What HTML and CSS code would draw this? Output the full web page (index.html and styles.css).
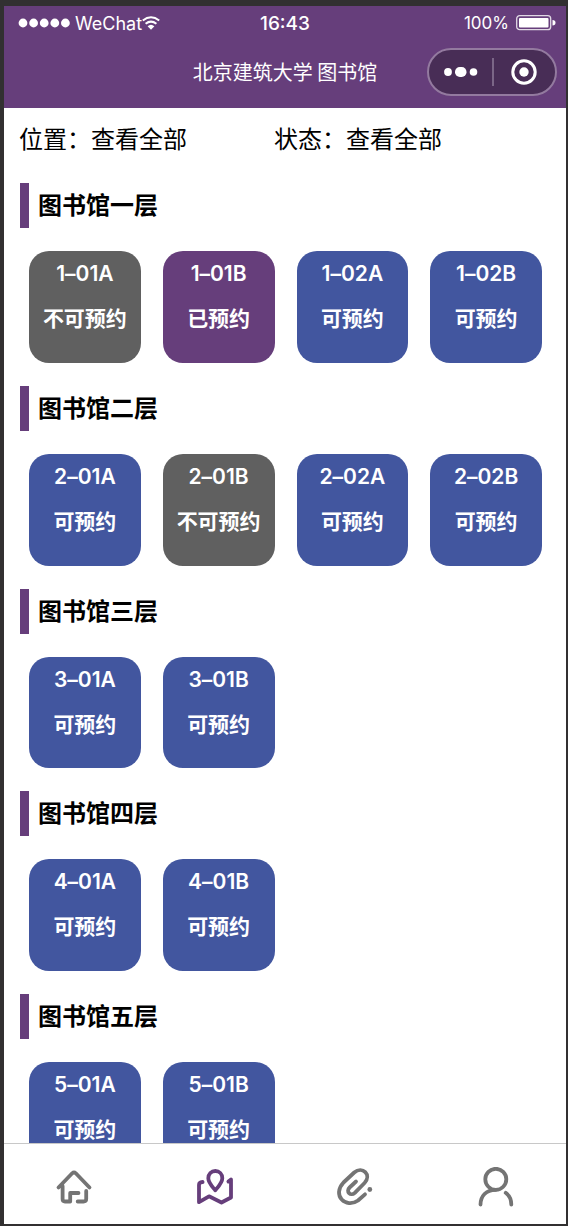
FILE: index.html
```html
<!DOCTYPE html>
<html lang="zh-CN">
<head>
<meta charset="utf-8">
<meta name="viewport" content="width=device-width, initial-scale=1">
<title>北京建筑大学 图书馆</title>
<link rel="stylesheet" href="styles.css">
</head>
<body>
<div class="phone">
  <header class="header">
    <div class="status">
      <div class="carrier">
        <svg class="signal" viewBox="0 0 52 10" aria-hidden="true"><circle cx="5" cy="5" r="4.4"/><circle cx="15.6" cy="5" r="4.4"/><circle cx="26.2" cy="5" r="4.4"/><circle cx="36.8" cy="5" r="4.4"/><circle cx="47.4" cy="5" r="4.4"/></svg>
        <span>WeChat</span>
        <svg class="wifi" viewBox="0 0 18 14" aria-hidden="true"><path d="M.8 4.500Q9-2 17.200 4.500M3.600 7.800Q9 3.400 14.400 7.800" fill="none" stroke="#fff" stroke-width="2"/><path d="M5.600 10.200Q9 7.200 12.400 10.200L9 13.800Z" fill="#fff"/></svg>
      </div>
      <span class="time">16:43</span>
      <div class="power">
        <span>100%</span>
        <svg class="battery" viewBox="0 0 40 16" aria-hidden="true"><rect x=".7" y=".7" width="34" height="14" rx="3" fill="none" stroke="#fff" stroke-opacity=".8" stroke-width="1.300"/><rect x="3" y="3" width="29.500" height="9.500" rx="1" fill="#fff"/><path d="M36.500 5Q39.500 5 39.500 7.700T36.500 10.500Z" fill="#fff"/></svg>
      </div>
    </div>
    <div class="nav">
      <h1 class="title">北京建筑大学 图书馆</h1>
      <div class="capsule">
        <button class="capsule-btn" type="button" aria-label="更多"><svg class="dots" viewBox="0 0 34 12" fill="#fff"><circle cx="4" cy="6" r="3.900"/><rect x="11" y="1" width="11.500" height="10" rx="4.800"/><circle cx="29.500" cy="6" r="3.800"/></svg></button>
        <button class="capsule-btn" type="button" aria-label="关闭"><svg class="target" viewBox="0 0 26 26"><circle cx="13" cy="13" r="11.200" fill="none" stroke="#fff" stroke-width="3"/><circle cx="13" cy="13" r="4.700" fill="#fff"/></svg></button>
      </div>
    </div>
  </header>

  <main class="content">
    <form class="filters">
      <div class="filter"><label for="place">位置：</label><select id="place" class="picker"><option>查看全部</option></select></div>
      <div class="filter"><label for="state">状态：</label><select id="state" class="picker"><option>查看全部</option></select></div>
    </form>

    <section class="floor">
      <h2 class="floor-name">图书馆一层</h2>
      <div class="rooms">
        <button class="room closed" type="button"><span>1–01A</span><span>不可预约</span></button>
        <button class="room booked" type="button"><span>1–01B</span><span>已预约</span></button>
        <button class="room" type="button"><span>1–02A</span><span>可预约</span></button>
        <button class="room" type="button"><span>1–02B</span><span>可预约</span></button>
      </div>
    </section>
    <section class="floor">
      <h2 class="floor-name">图书馆二层</h2>
      <div class="rooms">
        <button class="room" type="button"><span>2–01A</span><span>可预约</span></button>
        <button class="room closed" type="button"><span>2–01B</span><span>不可预约</span></button>
        <button class="room" type="button"><span>2–02A</span><span>可预约</span></button>
        <button class="room" type="button"><span>2–02B</span><span>可预约</span></button>
      </div>
    </section>
    <section class="floor">
      <h2 class="floor-name">图书馆三层</h2>
      <div class="rooms">
        <button class="room" type="button"><span>3–01A</span><span>可预约</span></button>
        <button class="room" type="button"><span>3–01B</span><span>可预约</span></button>
      </div>
    </section>
    <section class="floor">
      <h2 class="floor-name">图书馆四层</h2>
      <div class="rooms">
        <button class="room" type="button"><span>4–01A</span><span>可预约</span></button>
        <button class="room" type="button"><span>4–01B</span><span>可预约</span></button>
      </div>
    </section>
    <section class="floor">
      <h2 class="floor-name">图书馆五层</h2>
      <div class="rooms">
        <button class="room" type="button"><span>5–01A</span><span>可预约</span></button>
        <button class="room" type="button"><span>5–01B</span><span>可预约</span></button>
      </div>
    </section>
  </main>

  <nav class="tabs">
    <a class="tab" href="#home" aria-label="首页"><svg class="tab-icon" viewBox="0 0 40 40"><path d="M4.500 20.500L18.200 6.300Q20 4.600 21.800 6.300L35.500 20.500M8.600 19V32Q8.600 34.500 11 34.500H16.200V26H24.500M23.700 34.500H29.500Q32.200 34.500 32.200 32V24"/></svg></a>
    <a class="tab active" href="#map" aria-label="地图"><svg class="tab-icon" viewBox="0 0 40 40"><path d="M7.600 15Q4 15.200 4 18V35.200L14 29.300L26.500 35.500L36 30.500V12.500L33.400 14.500M20.300 23.300C17 19.300 13.300 15.500 13.300 11.200C13.300 7 16.300 4 20.300 4S27.300 7 27.300 11.200C27.300 15.500 23.600 19.300 20.300 23.300Z"/></svg></a>
    <a class="tab" href="#links" aria-label="预约记录"><svg class="tab-icon" viewBox="0 0 40 40"><path d="M21 14.500L14.600 20.500C10.500 24.500 15.500 29.800 19.800 25.800L29.500 16C37 8 27.500-1.500 19.200 5.500L8.500 15.500C-3.500 28.500 11 42 23 33.500L30 27.300"/><circle class="dot" cx="34.800" cy="22.500" r="2.400"/></svg></a>
    <a class="tab" href="#me" aria-label="我的"><svg class="tab-icon" viewBox="0 0 40 40"><circle cx="19.800" cy="12.300" r="10.500"/><path d="M19.500 22.800C10 23 4.700 29 4.500 37.500M29.700 25.800Q35.300 30 35.300 37.500"/></svg></a>
  </nav>
</div>
</body>
</html>
```

FILE: styles.css
```css
* {
  box-sizing: border-box;
}

body {
  margin: 0;
  background: #323031;
  color: #000;
  font-family: Inter, "Noto Sans CJK SC", sans-serif;
}

button,
select {
  margin: 0;
  padding: 0;
  border: 0;
  background: none;
  color: inherit;
  font: inherit;
  appearance: none;
}

h1,
h2 {
  margin: 0;
}

svg {
  display: block;
}

.phone {
  display: flex;
  flex-direction: column;
  height: 100vh;
  padding: 6px 2px 2px 4px;
}

.header {
  flex: none;
  padding-bottom: 12px;
  background: #663e7b;
  color: #fff;
}

.status {
  display: grid;
  grid-template-columns: 1fr auto 1fr;
  align-items: center;
  height: 34px;
  padding: 0 10px;
  font-size: 18px;
}

.carrier,
.power {
  display: flex;
  align-items: center;
}

.carrier {
  padding-left: 4px;
}

.power {
  justify-content: flex-end;
  gap: 7px;
  font-size: 17px;
}

.signal {
  width: 52px;
  height: 10px;
  margin-right: 5px;
  fill: #fff;
}

.wifi {
  width: 18px;
  height: 14px;
}

.time {
  font-size: 19px;
  font-weight: 500;
}

.battery {
  width: 40px;
  height: 16px;
}

.nav {
  display: grid;
  grid-template-columns: 1fr auto 1fr;
  align-items: center;
  padding: 8px 9px 0;
}

.title {
  grid-column: 2;
  font-family: "Noto Sans CJK SC", sans-serif;
  font-size: 20px;
  font-weight: 400;
  line-height: 30px;
}

.capsule {
  display: flex;
  justify-self: end;
  width: 130px;
  height: 48px;
  border: 2px solid #937a9f;
  border-radius: 24px;
  background: #482d56;
}

.capsule-btn {
  display: flex;
  flex: 1;
  align-items: center;
  justify-content: center;
}

.capsule-btn + .capsule-btn {
  position: relative;
}

.capsule-btn + .capsule-btn::before {
  position: absolute;
  top: 8px;
  left: 0;
  width: 2px;
  height: 28px;
  background: #7b6687;
  content: "";
}

.dots {
  width: 34px;
  height: 12px;
}

.target {
  width: 26px;
  height: 26px;
}

.content {
  flex: 1;
  min-height: 0;
  overflow-y: auto;
  background: #fff;
  scrollbar-width: none;
}

.filters {
  display: grid;
  grid-template-columns: 1fr 1fr;
  padding: 9px 37px 21px 15px;
  font-size: 24px;
  line-height: 45px;
}

.filter {
  display: flex;
}

.floor {
  padding: 0 24px 23px 16px;
}

.floor-name {
  padding-left: 9px;
  border-left: 9px solid #663e7b;
  font-size: 24px;
  font-weight: 700;
  line-height: 45px;
}

.rooms {
  display: grid;
  grid-template-columns: repeat(4, 1fr);
  gap: 22px;
  padding: 23px 0 0 9px;
}

.room {
  display: flex;
  flex-direction: column;
  align-items: center;
  aspect-ratio: 1;
  border-radius: 20px;
  background: #42569f;
  color: #fff;
  font-size: 21px;
  font-weight: 600;
  font-feature-settings: "calt" 0;
  line-height: 45px;
  white-space: nowrap;
}

.room.closed {
  background: #606060;
}

.room.booked {
  background: #663e7b;
}

.tabs {
  display: grid;
  flex: none;
  grid-template-columns: repeat(4, 1fr);
  height: 81px;
  border-top: 1px solid #c8c8c8;
  background: #fff;
}

.tab {
  display: flex;
  align-items: center;
  justify-content: center;
  padding-top: 6px;
  color: #747474;
}

.tab.active {
  color: #663e7b;
}

.tab-icon {
  width: 40px;
  height: 40px;
  fill: none;
  stroke: currentColor;
  stroke-width: 3.8;
  stroke-linecap: round;
  stroke-linejoin: round;
}

.dot {
  fill: currentColor;
  stroke: none;
}
```
